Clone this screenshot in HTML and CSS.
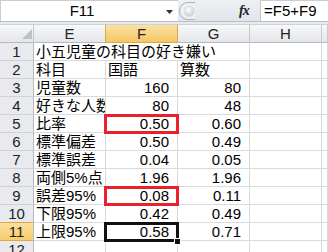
FILE: index.html
```html
<!DOCTYPE html>
<html lang="ja">
<head>
<meta charset="utf-8">
<link rel="stylesheet" href="styles.css">
</head>
<body>
<div class="app">
  <div class="topbar">
    <div class="namebox">
      <span class="name">F11</span>
      <svg class="dd" width="7" height="4" viewBox="0 0 7 4"><path d="M0 0H7L3.5 4Z" fill="#333"/></svg>
    </div>
    <div class="fxzone">
      <svg class="knob" width="16" height="18" viewBox="0 0 16 18">
        <defs>
          <radialGradient id="kg" cx="0.45" cy="0.4" r="0.6">
            <stop offset="0" stop-color="#ffffff"/>
            <stop offset="1" stop-color="#c9ccd0"/>
          </radialGradient>
        </defs>
        <path d="M16 0.5H9A8.5 8.5 0 0 0 9 17.5H16" fill="#eef0f2" stroke="#a9afb7"/>
        <circle cx="10" cy="9" r="5.5" fill="url(#kg)"/>
      </svg>
      <span class="fx">fx</span>
    </div>
    <div class="formula">=F5+F9</div>
  </div>
  <div class="strip"></div>
  <div class="sheet">
    <div class="hd corner"><svg width="10" height="10" viewBox="0 0 10 10"><path d="M10 0V10H0Z" fill="#bfc1c4"/></svg></div>
    <div class="hd">E</div>
    <div class="hd sel">F</div>
    <div class="hd">G</div>
    <div class="hd">H</div>
    <div class="hd"></div>

    <div class="rh">1</div>
    <div class="c t span3">小五児童の科目の好き嫌い</div>
    <div class="c"></div><div class="c"></div>

    <div class="rh">2</div>
    <div class="c t">科目</div><div class="c t">国語</div><div class="c t">算数</div><div class="c"></div><div class="c"></div>

    <div class="rh">3</div>
    <div class="c t">児童数</div><div class="c n">160</div><div class="c n">80</div><div class="c"></div><div class="c"></div>

    <div class="rh">4</div>
    <div class="c t">好きな人数</div><div class="c n">80</div><div class="c n">48</div><div class="c"></div><div class="c"></div>

    <div class="rh">5</div>
    <div class="c t">比率</div><div class="c n mark">0.50</div><div class="c n">0.60</div><div class="c"></div><div class="c"></div>

    <div class="rh">6</div>
    <div class="c t">標準偏差</div><div class="c n">0.50</div><div class="c n">0.49</div><div class="c"></div><div class="c"></div>

    <div class="rh">7</div>
    <div class="c t">標準誤差</div><div class="c n">0.04</div><div class="c n">0.05</div><div class="c"></div><div class="c"></div>

    <div class="rh">8</div>
    <div class="c t">両側5%点</div><div class="c n">1.96</div><div class="c n">1.96</div><div class="c"></div><div class="c"></div>

    <div class="rh">9</div>
    <div class="c t">誤差95%</div><div class="c n mark">0.08</div><div class="c n">0.11</div><div class="c"></div><div class="c"></div>

    <div class="rh">10</div>
    <div class="c t">下限95%</div><div class="c n">0.42</div><div class="c n">0.49</div><div class="c"></div><div class="c"></div>

    <div class="rh selrow">11</div>
    <div class="c t">上限95%</div><div class="c n active">0.58</div><div class="c n">0.71</div><div class="c"></div><div class="c"></div>

    <div class="rh">12</div>
    <div class="c"></div><div class="c"></div><div class="c"></div><div class="c"></div><div class="c"></div>
  </div>
</div>
</body>
</html>
```

FILE: styles.css
```css
html, body {
  margin: 0;
  padding: 0;
  background: #ffffff;
  overflow: hidden;
}

.app {
  width: 328px;
  height: 252px;
  overflow: hidden;
  font-family: "Liberation Sans", "Noto Sans CJK JP", sans-serif;
  font-size: 15px;
  color: #000;
}

.topbar {
  display: flex;
  height: 22px;
  box-sizing: border-box;
  border-bottom: 1px solid #b8bec6;
}

.namebox {
  width: 178px;
  box-sizing: border-box;
  border-top: 1px solid #c9ccd1;
  border-left: 1px solid #c9ccd1;
  background: #fff;
  display: flex;
  align-items: center;
}

.name {
  width: 162px;
  text-align: center;
  line-height: 20px;
}

.dd {
  margin-left: 3px;
  margin-top: 2px;
}

.fxzone {
  width: 82px;
  background: linear-gradient(#eef0f3, #e1e5ea);
  display: flex;
  align-items: center;
  padding-left: 1px;
  box-sizing: border-box;
}

.knob {
  display: block;
}

.fx {
  margin-left: 44px;
  font-family: "Liberation Serif", "DejaVu Serif", serif;
  font-style: italic;
  font-weight: bold;
  font-size: 14px;
  color: #222;
  letter-spacing: -1px;
}

.formula {
  flex: 1;
  background: #fff;
  border-left: 1px solid #c2c7ce;
  border-top: 1px solid #c9ccd1;
  padding-left: 3px;
  line-height: 20px;
}

.strip {
  height: 2px;
  background: #e6e9ee;
}

.sheet {
  display: grid;
  grid-template-columns: 34px 72px 72px 72px 72px 1fr;
  grid-template-rows: 19px repeat(12, 18px);
}

.sheet > div {
  box-sizing: border-box;
  white-space: nowrap;
  line-height: 17px;
}

.hd {
  background: linear-gradient(#f7f8f9, #e4e6e9);
  border-top: 1px solid #cfd2d6;
  border-right: 1px solid #c6c9cd;
  border-bottom: 1px solid #b6bac0;
  text-align: center;
  color: #222;
}

.hd.sel {
  background: linear-gradient(#fbe1a2, #f4c766);
  border-right-color: #e0a846;
  border-left: 1px solid #e0a846;
  margin-left: -1px;
  border-bottom-color: #e5a53a;
}

.corner {
  display: flex;
  justify-content: flex-end;
  align-items: flex-end;
  padding: 0 1px 3px 0;
}

.corner svg {
  display: block;
}

.rh {
  background: #e8eaed;
  border-right: 1px solid #b6bac0;
  border-bottom: 1px solid #cfd2d6;
  text-align: center;
  color: #222;
}

.rh.selrow {
  background: linear-gradient(#fbe09d, #f6cd6f);
  border-bottom-color: #e0a846;
  border-top: 1px solid #e0a846;
  margin-top: -1px;
}

.c {
  border-right: 1px solid #d8dadc;
  border-bottom: 1px solid #d8dadc;
}

.t {
  padding-left: 2px;
  overflow-x: clip;
}

.span3 {
  grid-column: span 3;
  overflow-x: visible;
}

.n {
  text-align: right;
  padding-right: 8px;
}

.mark, .active {
  position: relative;
}

.mark::after {
  content: "";
  position: absolute;
  left: -2px;
  right: -2px;
  top: -1px;
  bottom: -2px;
  border: 3px solid #e8212b;
}

.active::after {
  content: "";
  position: absolute;
  left: -2px;
  right: -2px;
  top: -1px;
  bottom: -2px;
  border: 3px solid #111;
}

.active::before {
  content: "";
  position: absolute;
  right: -4px;
  bottom: -5px;
  width: 5px;
  height: 5px;
  background: #111;
  border: 1px solid #fff;
  z-index: 2;
}
```
